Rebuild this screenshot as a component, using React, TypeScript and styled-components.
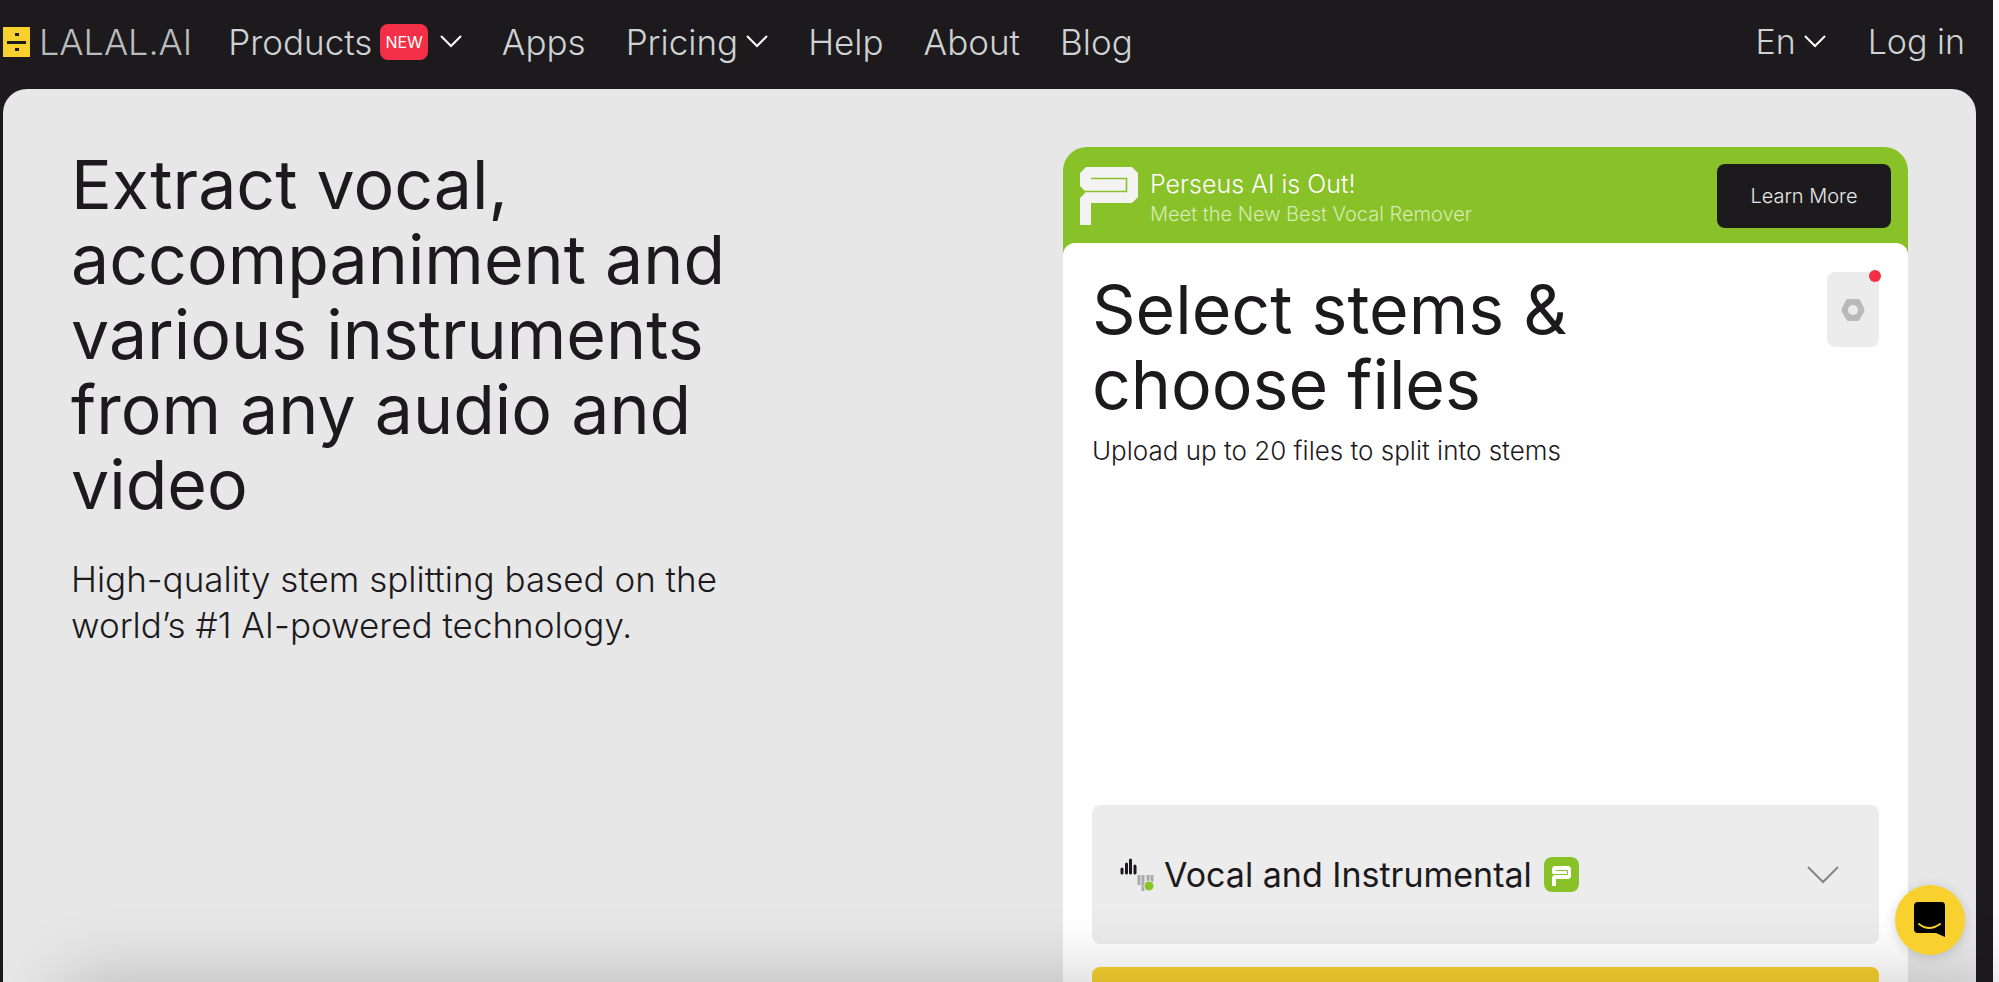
import React from 'react';
import styled, { createGlobalStyle } from 'styled-components';

const Global = createGlobalStyle`
  *, *::before, *::after { box-sizing: border-box; }
  html, body { margin: 0; background: #fafafa; }
  body { font-family: Inter, "Liberation Sans", sans-serif; font-weight: 300; color: #1c1a1d; overflow: hidden; }
  h1, h2, p { margin: 0; }
  a { color: inherit; text-decoration: none; }
  button { font: inherit; color: inherit; border: 0; padding: 0; background: none; cursor: pointer; }
  svg { display: block; flex: none; }
`;

const Page = styled.div`
  height: 100vh;
  margin-right: 6px;
  display: flex;
  flex-direction: column;
  background: #1c1a1d;
  overflow: hidden;
`;

const Header = styled.header`
  display: flex;
  align-items: center;
  flex: none;
  height: 89px;
  padding: 0 28px 6px 3px;
  font-size: 34px;
  line-height: 40px;
  color: #cfd1d3;
  white-space: nowrap;
`;

const Brand = styled.a`
  display: flex;
  align-items: center;
  gap: 9px;
  margin-right: 36px;
  color: #b9bbbd;
  font-size: 36px;
`;

const Nav = styled.nav`
  display: flex;
  align-items: center;
  gap: 40px;
  flex: 1;
  font-size: 35px;
`;

const NavButton = styled.button`
  display: flex;
  align-items: center;
  gap: 8px;
`;

const Account = styled.div`
  display: flex;
  align-items: center;
  gap: 42px;
`;

const NewBadge = styled.span`
  padding: 0 5px;
  margin-right: 4px;
  border-radius: 8px;
  background: #f22f46;
  color: #fff;
  font-size: 16px;
  line-height: 36px;
  font-weight: 400;
`;

const Hero = styled.main`
  flex: 1;
  min-height: 0;
  display: flex;
  justify-content: space-between;
  align-items: flex-start;
  margin: 0 17px 0 3px;
  padding: 58px 68px 0;
  border-radius: 24px 24px 0 0;
  background: #e7e7e7;
  overflow: hidden;
`;

const Intro = styled.section`
  width: 38%;
`;

const Title = styled.h1`
  font-size: 68px;
  line-height: 75px;
  font-weight: 400;
`;

const Lead = styled.p`
  margin-top: 34px;
  font-size: 35px;
  line-height: 46px;
`;

const Card = styled.section`
  width: 46%;
  border-radius: 24px 24px 0 0;
  background: #88c128;
`;

const Banner = styled.div`
  display: flex;
  align-items: center;
  gap: 12px;
  padding: 17px 17px 15px;
`;

const BannerText = styled.div`
  flex: 1;
  padding-top: 4px;
  color: #fff;
`;

const BannerTitle = styled.p`
  font-size: 25px;
  line-height: 32px;
`;

const BannerNote = styled.p`
  font-size: 20px;
  line-height: 28px;
  color: #d6eab4;
`;

const LearnMore = styled.a`
  width: 174px;
  border-radius: 8px;
  background: #1c1a1d;
  color: #e6e6e6;
  font-size: 20px;
  line-height: 64px;
  text-align: center;
`;

const CardBody = styled.div`
  display: flex;
  flex-direction: column;
  height: 900px;
  padding: 29px 29px 0;
  border-radius: 12px 12px 0 0;
  background: #fff;
`;

const CardHead = styled.div`
  display: flex;
  justify-content: space-between;
  align-items: flex-start;
  height: 533px;
`;

const CardTitle = styled.h2`
  font-size: 68px;
  line-height: 75px;
  font-weight: 400;
`;

const CardNote = styled.p`
  margin-top: 12px;
  font-size: 26px;
  line-height: 34px;
`;

const Settings = styled.button`
  position: relative;
  display: grid;
  place-items: center;
  width: 52px;
  height: 75px;
  border-radius: 8px;
  background: #ececec;
`;

const Dot = styled.span`
  position: absolute;
  top: -2px;
  right: -2px;
  width: 12px;
  height: 12px;
  border-radius: 50%;
  background: #f22f46;
`;

const StemSelect = styled.button`
  display: flex;
  align-items: center;
  flex: none;
  height: 139px;
  padding: 0 40px 0 27px;
  border-radius: 8px;
  background: #ececec;
  font-size: 34px;
  line-height: 40px;
  font-weight: 400;
`;

const StemName = styled.span`
  margin: 0 12px 0 10px;
`;

const Grow = styled.span`
  flex: 1;
`;

const Upload = styled.button`
  flex: none;
  height: 139px;
  margin-top: 23px;
  border-radius: 8px;
  background: #f8d12f;
`;

const BottomShade = styled.div`
  position: fixed;
  left: 64px;
  right: 0;
  top: 100%;
  height: 80px;
  box-shadow: 0 0 72px rgba(0, 0, 0, 0.22);
  pointer-events: none;
`;

const Chat = styled.button`
  position: fixed;
  right: 34px;
  bottom: 27px;
  display: grid;
  place-items: center;
  width: 70px;
  height: 70px;
  border-radius: 50%;
  background: #f8d12f;
  box-shadow: 0 2px 12px rgba(0, 0, 0, 0.16);
`;

const Chevron = ({ width = 22, color = '#fff', stroke = 2 }: { width?: number; color?: string; stroke?: number }) => (
  <svg width={width} height={width / 2 + 2} viewBox={`0 0 ${width} ${width / 2 + 2}`} fill="none" stroke={color} strokeWidth={stroke}>
    <path d={`M1 1 L${width / 2} ${width / 2} L${width - 1} 1`} />
  </svg>
);

const PerseusMark = ({ size, color, line }: { size: number; color: string; line: string }) => (
  <svg width={size} height={size} viewBox="0 0 58 58">
    <path fill={color} d="M6 0H52L58 6V30L52 36H11V58H0V31L5 26V24L0 19V6Z" />
    <path fill="none" stroke={line} strokeWidth="1.6" d="M11 11.5H46.5V24.5H4" />
  </svg>
);

const LogoMark = () => (
  <svg width="27" height="30" viewBox="0 0 27 30">
    <rect width="27" height="30" fill="#f8d12f" />
    <path fill="#1c1a1d" d="M4 14H23V17H4ZM12 6H16V9H12ZM12 21H16V24H12Z" />
  </svg>
);

const StemIcon = () => (
  <svg width="35" height="34" viewBox="0 0 35 34">
    <path stroke="#1c1a1d" strokeWidth="3" strokeLinecap="round" d="M3 11V15M7.500 6V15M11.500 2V15M16 8V15" />
    <path stroke="#a9a9a9" strokeWidth="3" d="M20 17V27M24 17V33M29 17V24M33 17V24" />
    <circle cx="30" cy="28" r="5" fill="#88c128" stroke="#ececec" strokeWidth="1" />
  </svg>
);

const StemBadge = () => (
  <svg width="35" height="35" viewBox="0 0 35 35">
    <rect width="35" height="35" rx="8" fill="#88c128" />
    <path fill="#fff" d="M10 9H25L27 11V20L25 22H12V29H8V20L10 18L8 16V11Z" />
    <path fill="none" stroke="#88c128" d="M12 13.500H23.500V17.500H9" />
  </svg>
);

export default function App() {
  return (
    <>
      <Global />
      <Page>
        <Header>
          <Brand href="#"><LogoMark />LALAL.AI</Brand>
          <Nav>
            <NavButton>Products <NewBadge>NEW</NewBadge><Chevron /></NavButton>
            <a href="#apps">Apps</a>
            <NavButton>Pricing<Chevron /></NavButton>
            <a href="#help">Help</a>
            <a href="#about">About</a>
            <a href="#blog">Blog</a>
          </Nav>
          <Account>
            <NavButton>En<Chevron /></NavButton>
            <a href="#login">Log in</a>
          </Account>
        </Header>
        <Hero>
          <Intro>
            <Title>Extract vocal,<br />accompaniment and<br />various instruments<br />from any audio and<br />video</Title>
            <Lead>High-quality stem splitting based on the<br />world’s #1 AI-powered technology.</Lead>
          </Intro>
          <Card>
            <Banner>
              <PerseusMark size={58} color="#f3f3f3" line="#88c128" />
              <BannerText>
                <BannerTitle>Perseus AI is Out!</BannerTitle>
                <BannerNote>Meet the New Best Vocal Remover</BannerNote>
              </BannerText>
              <LearnMore href="#perseus">Learn More</LearnMore>
            </Banner>
            <CardBody>
              <CardHead>
                <div>
                  <CardTitle>Select stems &amp;<br />choose files</CardTitle>
                  <CardNote>Upload up to 20 files to split into stems</CardNote>
                </div>
                <Settings aria-label="Settings">
                  <svg width="24" height="22" viewBox="0 0 24 22">
                    <path fill="#b9b9b9" fillRule="evenodd" d="M7 0H17Q18 0 19 1L23 9Q24 11 23 13L19 20Q18 22 17 22H7Q6 22 5 20L1 13Q0 11 1 9L5 1Q6 0 7 0ZM12 6A5 5 0 1 0 12 16A5 5 0 1 0 12 6Z" />
                  </svg>
                  <Dot />
                </Settings>
              </CardHead>
              <StemSelect>
                <StemIcon />
                <StemName>Vocal and Instrumental</StemName>
                <StemBadge />
                <Grow />
                <Chevron width={32} color="#858585" />
              </StemSelect>
              <Upload aria-label="Select files" />
            </CardBody>
          </Card>
        </Hero>
      </Page>
      <BottomShade />
      <Chat aria-label="Open chat">
        <svg width="32" height="36" viewBox="0 0 32 36">
          <path d="M4 0H28Q31 0 31 4V35L22 31H4Q0 31 0 27V4Q0 0 4 0Z" />
          <path d="M5 22Q15 30 26 22" fill="none" stroke="#f8d12f" strokeWidth="2" strokeLinecap="round" />
        </svg>
      </Chat>
    </>
  );
}
